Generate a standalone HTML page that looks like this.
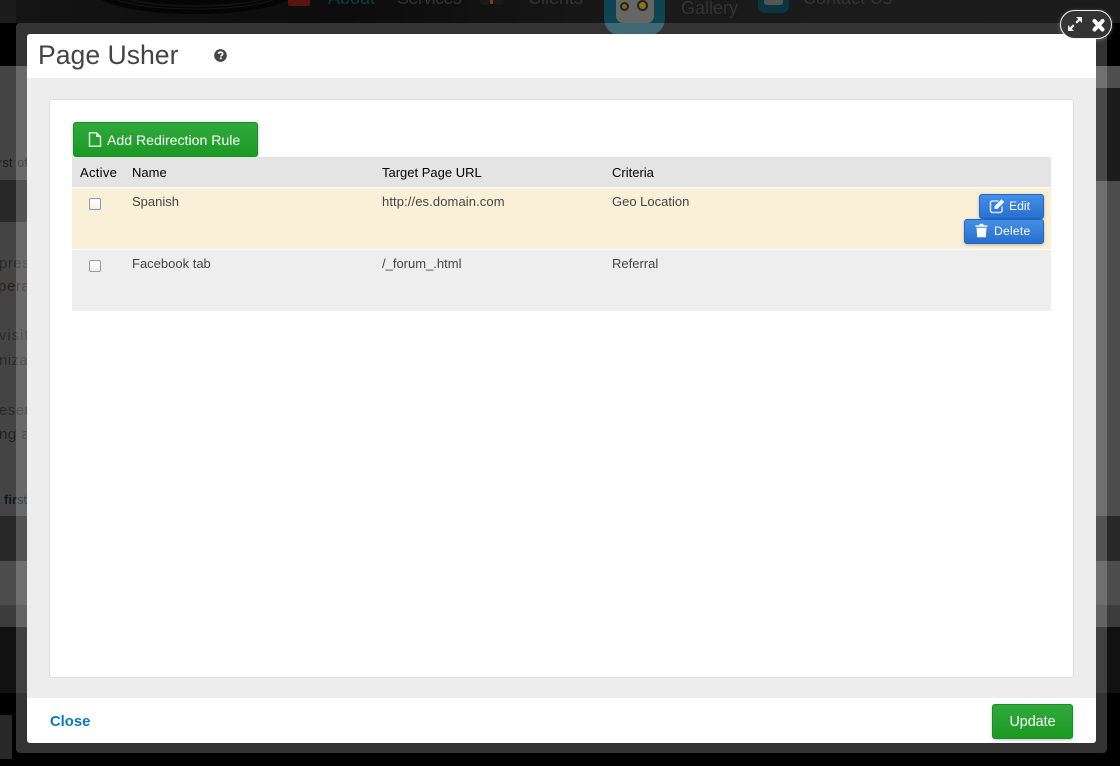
<!DOCTYPE html>
<html><head><meta charset="utf-8"><title>Page Usher</title>
<style>
html,body{margin:0;padding:0;width:1120px;height:766px;overflow:hidden;background:#000;font-family:"Liberation Sans",sans-serif}
.a{position:absolute}
.t{position:absolute;white-space:nowrap;line-height:16px}
.bg{font-size:15px;color:#1a1a1a}
.nav{font-size:18px;color:#333;white-space:nowrap;position:absolute;line-height:22px}
.btn{position:absolute;box-sizing:border-box;border-radius:3px;color:#fff;white-space:nowrap}
.g{background:linear-gradient(#31a93d,#1b9a23);border:1px solid #1b8f25;box-shadow:0 1px 3px rgba(0,0,0,.25)}
.b{background:linear-gradient(#448fe6,#2870d0);border:1px solid #2468c4;box-shadow:0 1px 3px rgba(0,0,0,.25);font-size:12.2px;line-height:23px}
.cb{position:absolute;box-sizing:border-box;width:12px;height:12px;border:1px solid #999;border-radius:2px;background:linear-gradient(#fff,#f0f0f0)}
.h{font-size:13px;color:#000;top:165px}
.c{font-size:13px;color:#444}
</style></head><body>
<!-- backdrop left column -->
<div class="a" style="left:0;top:0;width:1120px;height:23px;background:#1c1c1c"></div>
<div class="a" style="left:0;top:23px;width:1120px;height:43px;background:#000"></div>
<div class="a" style="left:16px;top:0;width:1092px;height:23px;background:linear-gradient(90deg,#141414,#0c0c0c 30%,#1a1a1a 60%,#1c1c1c)"></div>
<div class="a" style="left:0;top:66px;width:60px;height:114px;background:#444"></div>
<div class="a" style="left:0;top:180px;width:60px;height:42px;background:#282828"></div>
<div class="a" style="left:0;top:222px;width:60px;height:294px;background:#444"></div>
<!-- backdrop right column -->
<div class="a" style="left:1090px;top:66px;width:30px;height:22px;background:#4e4e4e"></div>
<div class="a" style="left:1090px;top:88px;width:30px;height:93px;background:#1c1c1c"></div>
<div class="a" style="left:1090px;top:181px;width:30px;height:335px;background:#4c4c4c"></div>
<!-- shared bands -->
<div class="a" style="left:0;top:516px;width:1120px;height:45px;background:#282828"></div>
<div class="a" style="left:0;top:561px;width:1120px;height:44px;background:#4c4c4c"></div>
<div class="a" style="left:0;top:605px;width:1120px;height:22px;background:#3c3c3c"></div>
<div class="a" style="left:0;top:627px;width:1120px;height:66px;background:#111"></div>
<div class="a" style="left:0;top:693px;width:1120px;height:73px;background:#000"></div>
<div class="a" style="left:0;top:715px;width:12px;height:44px;background:#282828"></div>
<!-- backdrop nav art -->
<svg class="a" style="left:0;top:0" width="1120" height="23" viewBox="0 0 1120 23">
<ellipse cx="195" cy="-8" rx="100" ry="22" fill="#050505"/>
<ellipse cx="195" cy="-8" rx="88" ry="17" fill="none" stroke="#161616" stroke-width="1"/>
<ellipse cx="195" cy="-8" rx="78" ry="14" fill="none" stroke="#111" stroke-width="2"/>
<rect x="288" y="-6" width="22" height="12" rx="2" fill="#5a1511"/>
<circle cx="485" cy="-1" r="6" fill="#1a1a1a"/><circle cx="498" cy="-1" r="6" fill="#1a1a1a"/><rect x="490" y="0" width="3" height="4" fill="#5e4a10"/>
<rect x="758" y="-20" width="31" height="33" rx="7" fill="#0a3640"/>
<rect x="764" y="-10" width="19" height="15" rx="3" fill="#555"/>
</svg>
<div class="a" style="left:604px;top:-30px;width:61px;height:65px;border-radius:16px;background:#0f4452"></div>
<div class="a" style="left:616px;top:-20px;width:38px;height:43px;border-radius:7px;background:#666662"></div>
<div class="a" style="left:620px;top:2px;width:5px;height:5px;border-radius:50%;background:#7d6a10;border:2px solid #222"></div>
<div class="a" style="left:637px;top:0;width:7px;height:7px;border-radius:50%;background:#8a7410;border:2px solid #222"></div>
<div class="nav" style="left:328px;top:-13px;color:#0c3a44">About</div>
<div class="nav" style="left:397px;top:-13px;letter-spacing:-.6px">Services</div>
<div class="nav" style="left:528px;top:-13px">Clients</div>
<div class="nav" style="left:681px;top:-3px">Gallery</div>
<div class="nav" style="left:803px;top:-13px">Contact Us</div>
<!-- backdrop text fragments -->
<div class="t bg" style="left:-2px;top:155px;font-size:13px">rst <span style="margin-left:1px">of</span></div>
<div class="t bg" style="left:-1px;top:256px;letter-spacing:.5px;color:#2a2a2a">pres</div>
<div class="t bg" style="left:-2px;top:279px;letter-spacing:.6px;color:#2a2020">pera</div>
<div class="t bg" style="left:-1px;top:328px;letter-spacing:.9px;color:#2a2a2a">visito</div>
<div class="t bg" style="left:-1px;top:353px;letter-spacing:.4px;color:#2a2a2a">niza</div>
<div class="t bg" style="left:-1px;top:403px;letter-spacing:.5px;color:#2a2a2a">esen</div>
<div class="t bg" style="left:-1px;top:427px;letter-spacing:.5px;color:#222">ng a</div>
<div class="t bg" style="left:4px;top:492px;font-size:13px;color:#101820"><b>fir</b>st</div>
<!-- modal frame -->
<div class="a" style="left:16px;top:23px;width:1091px;height:730px;border-radius:4px;background:rgba(255,255,255,.2)"></div>
<div class="a" style="left:27px;top:34px;width:1069px;height:709px;background:#fff;border-radius:3px;overflow:hidden">
<div class="a" style="left:0;top:44px;width:1069px;height:620px;background:#ededed"></div>
</div>
<div class="a" style="left:49px;top:99px;width:1025px;height:579px;box-sizing:border-box;background:#fff;border:1px solid #ddd;border-radius:3px"></div>
<!-- title -->
<div class="t" style="left:38px;top:38px;font-size:26.6px;line-height:34px;color:#444">Page Usher</div>
<svg class="a" style="left:214px;top:49px" width="13" height="13" viewBox="0 0 14 14"><circle cx="7" cy="7" r="6.8" fill="#444"/><path d="M4.8 5.3C4.9 4 5.9 3.4 7.1 3.4C8.4 3.4 9.4 4.2 9.4 5.3C9.4 6.8 7.4 6.8 7.4 8.1" fill="none" stroke="#fff" stroke-width="1.7"/><rect x="6.3" y="9.1" width="2.1" height="1.9" fill="#fff"/></svg>
<!-- add button -->
<div class="btn g" style="left:73px;top:122px;width:185px;height:35px;font-size:14.1px;line-height:34px;padding-left:33px">Add Redirection Rule</div>
<svg class="a" style="left:88px;top:132px" width="14" height="15" viewBox="0 0 14 15"><path d="M1.5 .8H8.5L12.5 4.8V14.2H1.5Z" fill="none" stroke="#e8f6e8" stroke-width="1.4"/><path d="M8.2 .8V5H12.5Z" fill="#e8f6e8"/></svg>
<!-- table -->
<div class="a" style="left:72px;top:157px;width:979px;height:30px;background:#e4e4e4"></div>
<div class="a" style="left:72px;top:188px;width:979px;height:61px;background:#faf0d7"></div>
<div class="a" style="left:72px;top:250px;width:979px;height:61px;background:#eee"></div>
<div class="t h" style="left:80px;letter-spacing:.3px">Active</div>
<div class="t h" style="left:132px">Name</div>
<div class="t h" style="left:382px">Target Page URL</div>
<div class="t h" style="left:612px">Criteria</div>
<div class="cb" style="left:89px;top:198px"></div>
<div class="cb" style="left:89px;top:260px"></div>
<div class="t c" style="left:132px;top:194px">Spanish</div>
<div class="t c" style="left:382px;top:194px;letter-spacing:.1px">http://es.domain.com</div>
<div class="t c" style="left:612px;top:194px">Geo Location</div>
<div class="t c" style="left:132px;top:256px">Facebook tab</div>
<div class="t c" style="left:382px;top:256px">/_forum_.html</div>
<div class="t c" style="left:612px;top:256px">Referral</div>
<!-- edit / delete -->
<div class="btn b" style="left:979px;top:194px;width:65px;height:25px;padding-left:29px">Edit</div>
<svg class="a" style="left:989px;top:198px" width="17" height="16" viewBox="0 0 17 16"><path d="M9.5 3H3.5C2.4 3 1.5 3.9 1.5 5V12.5C1.5 13.6 2.4 14.5 3.5 14.5H11C12.1 14.5 13 13.6 13 12.5V8.5" fill="none" stroke="#cfe3fb" stroke-width="1.6"/><path d="M5.5 8.2L12.5 1.2L15.3 4L8.3 11H5.5Z" fill="#eef5fe"/></svg>
<div class="btn b" style="left:964px;top:219px;width:80px;height:25px;padding-left:29px;letter-spacing:.2px">Delete</div>
<svg class="a" style="left:975px;top:223px" width="13" height="15" viewBox="0 0 13 15"><path d="M.5 2.4H4.2L4.9 .8H8.1L8.8 2.4H12.5V3.8H.5ZM1.5 4.8H11.5L10.8 14.2H2.2Z" fill="#fff"/></svg>
<!-- footer -->
<div class="t" style="left:50px;top:714px;font-size:14.8px;font-weight:bold;color:#0a78c2">Close</div>
<div class="btn g" style="left:992px;top:704px;width:81px;height:35px;font-size:14.3px;line-height:34px;text-align:center">Update</div>
<!-- close pill -->
<div class="a" style="left:1060px;top:10px;width:52px;height:29px;box-sizing:border-box;border:1.5px solid #f0f0f0;border-radius:14.5px;background:#343434;box-shadow:0 1px 4px rgba(255,255,255,.3)"></div>
<svg class="a" style="left:1066px;top:15px" width="42" height="20" viewBox="0 0 42 20"><path d="M4 14L7.8 10.2M10.2 7.8L14 4" stroke="#eee" stroke-width="2.2"/><path d="M10 2H16V8ZM2 10V16H8Z" fill="#eee"/><path d="M28.5 6L36.5 14.5M36.5 6L28.5 14.5" stroke="#fff" stroke-width="4" stroke-linecap="round"/></svg>
</body></html>
